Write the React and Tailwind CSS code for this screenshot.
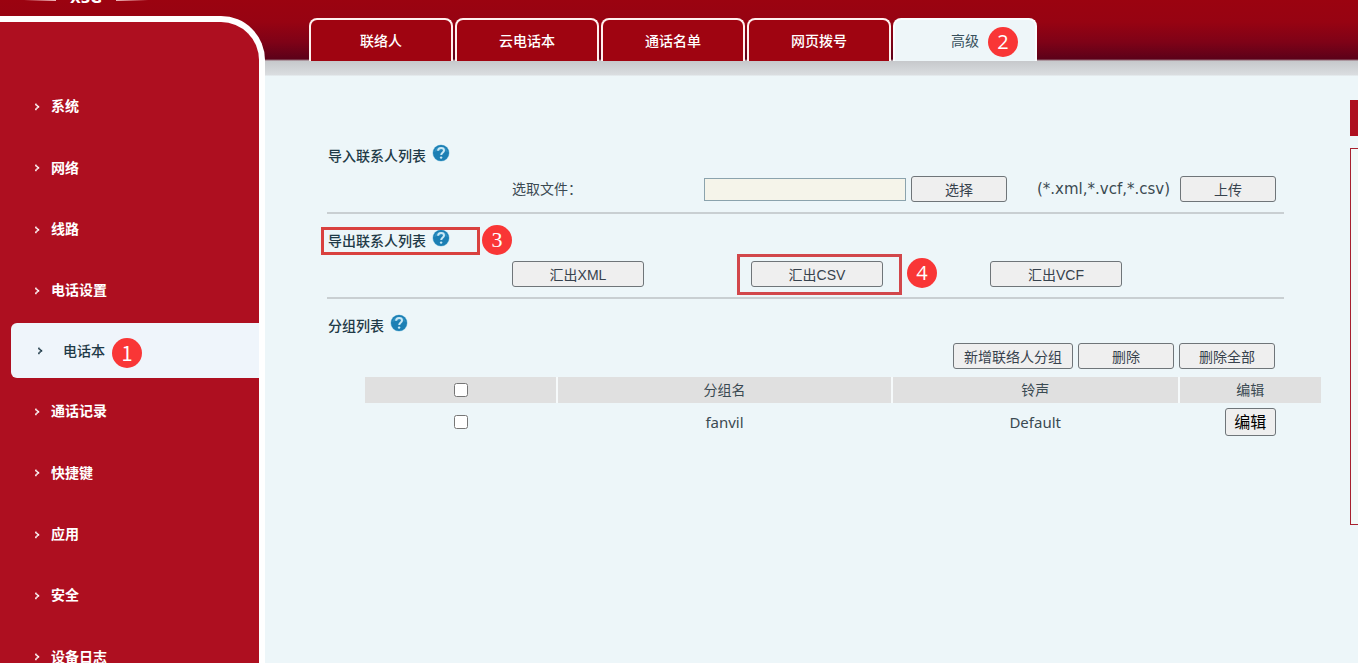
const CJK = "font-['Liberation_Sans','Noto_Sans_CJK_SC',sans-serif]";

const menu = ["系统", "网络", "线路", "电话设置", "电话本", "通话记录", "快捷键", "应用", "安全", "设备日志"];
const tabs = ["联络人", "云电话本", "通话名单", "网页拨号", "高级"];

function Badge({ n, className = "", font = "font-['Open_Sans',sans-serif] text-[20px]" }) {
  return (
    <span
      className={`absolute flex size-[30px] items-center justify-center rounded-full bg-[#f93636] leading-none font-normal text-white ${font} ${className}`}
    >
      {n}
    </span>
  );
}

function Chevron() {
  return (
    <svg viewBox="0 0 6 8" className="h-2 w-1.5 shrink-0" fill="currentColor" aria-hidden="true">
      <rect x="1" y="0.6" width="1.8" height="1.8" opacity="0.85" />
      <rect x="2.2" y="1.8" width="1.6" height="1.4" />
      <rect x="3.2" y="2.8" width="2" height="2" />
      <rect x="2.2" y="4.4" width="1.6" height="1.4" />
      <rect x="1" y="5.4" width="1.8" height="1.8" opacity="0.85" />
    </svg>
  );
}

function HelpIcon() {
  return (
    <svg viewBox="0 0 18 18" className="mb-1 size-[18px] shrink-0" aria-hidden="true">
      <circle cx="9" cy="9" r="8.6" fill="#9fd3e8" />
      <circle cx="9" cy="9" r="8" fill="#1c7fb4" />
      <path d="M2.2 8 A7 7 0 0 1 15.8 8 Q9 4.5 2.2 8Z" fill="#3f9ccb" opacity="0.6" />
      <path d="M6.1 6.8 C6.2 4.8 7.5 4.1 9.1 4.1 C10.9 4.1 12 5 12 6.5 C12 8.5 9.4 8.5 9.2 11" fill="none" stroke="#c9e8f5" strokeWidth="2" />
      <circle cx="9.1" cy="13.6" r="1.2" fill="#c9e8f5" />
    </svg>
  );
}

function Button({ children, className = "" }) {
  return (
    <button type="button" className={`h-[26px] rounded-[3px] border border-[#6f7579] bg-[#efefef] pt-0.5 text-[14px] leading-5 whitespace-nowrap text-[#37424d] ${className}`}>
      {children}
    </button>
  );
}

function Heading({ children, highlighted, badge }) {
  return (
    <div className="relative flex h-6 w-fit items-center gap-1.5 pl-px">
      <h2 className="pt-0.5 text-[14px] leading-6 font-medium text-[#1f3a47]">{children}</h2>
      <HelpIcon />
      {highlighted && <span className="absolute -top-px -left-1.5 h-7 w-[159px] border-[3px] border-[#d9413f]" />}
      {badge && <Badge n={badge} font="font-['Liberation_Serif',serif] text-[22px]" className="-top-[3px] left-[155px]" />}
    </div>
  );
}

export default function App() {
  return (
    <div className={`flex h-screen overflow-hidden bg-[#edf6f9] bg-[linear-gradient(#9b0310_0px,#970312_22px,#7f0217_42px,#5c0119_59px,#c6c8cb_61px,#dadde0_75px,#edf6f9_76px)] ${CJK} text-[14px] text-[#3b4a52]`}>
      <aside className="flex w-[265px] shrink-0 flex-col">
        <div className="flex h-4 shrink-0 items-start gap-3.5 overflow-hidden pl-6">
          <span className="h-px w-8 bg-linear-to-r from-transparent to-[#f0b8bc]" />
          <span className="-mt-3 font-['DejaVu_Sans',sans-serif] text-[14px] leading-5 font-bold text-white">X3G</span>
          <span className="h-px w-8 bg-linear-to-l from-transparent to-[#f0b8bc]" />
        </div>
        <nav className="grow rounded-tr-[44px] border-t-6 border-r-6 border-white bg-[#ae0f20] pt-[53px]">
          <ul className="flex h-[612px] flex-col">
            {menu.map((item) =>
              item === "电话本" ? (
                <li key={item} className="flex flex-1 items-center pl-[11px]">
                  <a href="#phonebook" className="relative flex h-[55px] grow items-center gap-5 rounded-l-md bg-[#eff5fb] pt-0.5 pl-[26px] font-medium text-[#1f3a47]">
                    <Chevron />
                    {item}
                    <Badge n="1" font="font-['Noto_Sans_CJK_SC',sans-serif] text-[20px]" className="top-[15px] left-[101px]" />
                  </a>
                </li>
              ) : (
                <li key={item} className="flex flex-1 items-center pt-0.5 pl-[34px]">
                  <a href="#menu" className="flex items-center gap-[11px] font-bold text-white">
                    <Chevron />
                    {item}
                  </a>
                </li>
              )
            )}
          </ul>
        </nav>
      </aside>

      <div className="flex min-w-0 grow flex-col">
        <nav className="flex shrink-0 gap-0.5 pt-[18px] pl-11">
          {tabs.map((tab) => (
            <a
              key={tab}
              href="#tab"
              className={`relative flex h-[43px] w-36 items-center justify-center rounded-t-lg border-2 border-b-0 pt-0.5 ${
                tab === "高级" ? "border-[#fbfdfe] bg-[#eef6f9] text-[#37505c]" : "border-[#fff0ee] bg-[#9f0411] font-medium text-white"
              }`}
            >
              {tab}
              {tab === "高级" && <Badge n="2" className="top-[7px] left-[93px]" />}
            </a>
          ))}
        </nav>

        <div className="flex grow">
          <main className="min-w-0 grow pt-17 pr-[29px] pl-[62px]">
            <section className="mr-[37px] border-b-2 border-[#c9cfd2] pt-3.5 pb-2.5">
              <Heading>导入联系人列表</Heading>
              <div className="mt-[9px] grid h-[26px] grid-cols-[185fr_192fr_580fr] items-center">
                <label htmlFor="file" className="col-start-2">选取文件：</label>
                <div className="flex items-center">
                  <input id="file" type="text" className="h-[23px] w-[202px] border border-[#8ba3ad] bg-[#f5f4ea] px-1 outline-none" />
                  <Button className="ml-[5px] w-24">选择</Button>
                  <span className="ml-[30px] w-[143px] font-['DejaVu_Sans',sans-serif] text-[15px] whitespace-nowrap">(*.xml,*.vcf,*.csv)</span>
                  <Button className="w-24">上传</Button>
                </div>
              </div>
            </section>

            <section className="mr-[37px] border-b-2 border-[#c9cfd2] pt-3.5 pb-2.5">
              <Heading highlighted badge="3">导出联系人列表</Heading>
              <div className="mt-[9px] grid grid-cols-[185fr_239fr_239fr_294fr]">
                <Button className="col-start-2 w-33">汇出XML</Button>
                <div className="relative">
                  <Button className="w-33">汇出CSV</Button>
                  <span className="pointer-events-none absolute -top-[7px] -left-3.5 h-[41px] w-[165px] border-[3px] border-[#d2474b]" />
                  <Badge n="4" className="-top-[3px] left-[156px]" />
                </div>
                <Button className="w-33">汇出VCF</Button>
              </div>
            </section>

            <section className="pt-3.5">
              <Heading>分组列表</Heading>
              <div className="mt-1.5 mr-[46px] flex justify-end gap-[5px]">
                <Button className="w-30">新增联络人分组</Button>
                <Button className="w-24">删除</Button>
                <Button className="w-24">删除全部</Button>
              </div>
              <div className="mt-2 pl-[38px]">
                <table className="w-full table-fixed border-separate border-spacing-0 text-center">
                  <colgroup>
                    <col className="w-[20%]" />
                    <col className="w-[35%]" />
                    <col className="w-[30%]" />
                    <col className="w-[15%]" />
                  </colgroup>
                  <thead>
                    <tr className="h-[26px] bg-[#e0e0e0]">
                      <th className="p-0 font-normal">
                        <input type="checkbox" aria-label="全选" className="mx-auto block size-3.5" />
                      </th>
                      <th className="border-l-2 border-[#f6fafb] p-0 font-normal">分组名</th>
                      <th className="border-l-2 border-[#f6fafb] p-0 font-normal">铃声</th>
                      <th className="border-l-2 border-[#f6fafb] p-0 font-normal">编辑</th>
                    </tr>
                  </thead>
                  <tbody>
                    <tr className="h-[38px] font-['Noto_Sans',sans-serif] text-[15px]">
                      <td className="p-0">
                        <input type="checkbox" aria-label="fanvil" className="mx-auto block size-3.5" />
                      </td>
                      <td className="border-l-2 border-transparent p-0">fanvil</td>
                      <td className="border-l-2 border-transparent p-0">Default</td>
                      <td className="border-l-2 border-transparent p-0">
                        <button type="button" className={`mx-auto block h-7 w-[51px] rounded-[3px] border border-[#6f7579] bg-[#efefef] pt-0.5 ${CJK} text-[16px] leading-6 text-black`}>编辑</button>
                      </td>
                    </tr>
                  </tbody>
                </table>
              </div>
            </section>
          </main>

          <aside className="flex w-2 shrink-0 flex-col gap-3 overflow-hidden pt-[39px]">
            <div className="h-9 bg-[#ae0f20]" />
            <div className="h-[377px] border border-r-0 border-[#a8202e] bg-[#f1f9f7]" />
          </aside>
        </div>
      </div>
    </div>
  );
}
